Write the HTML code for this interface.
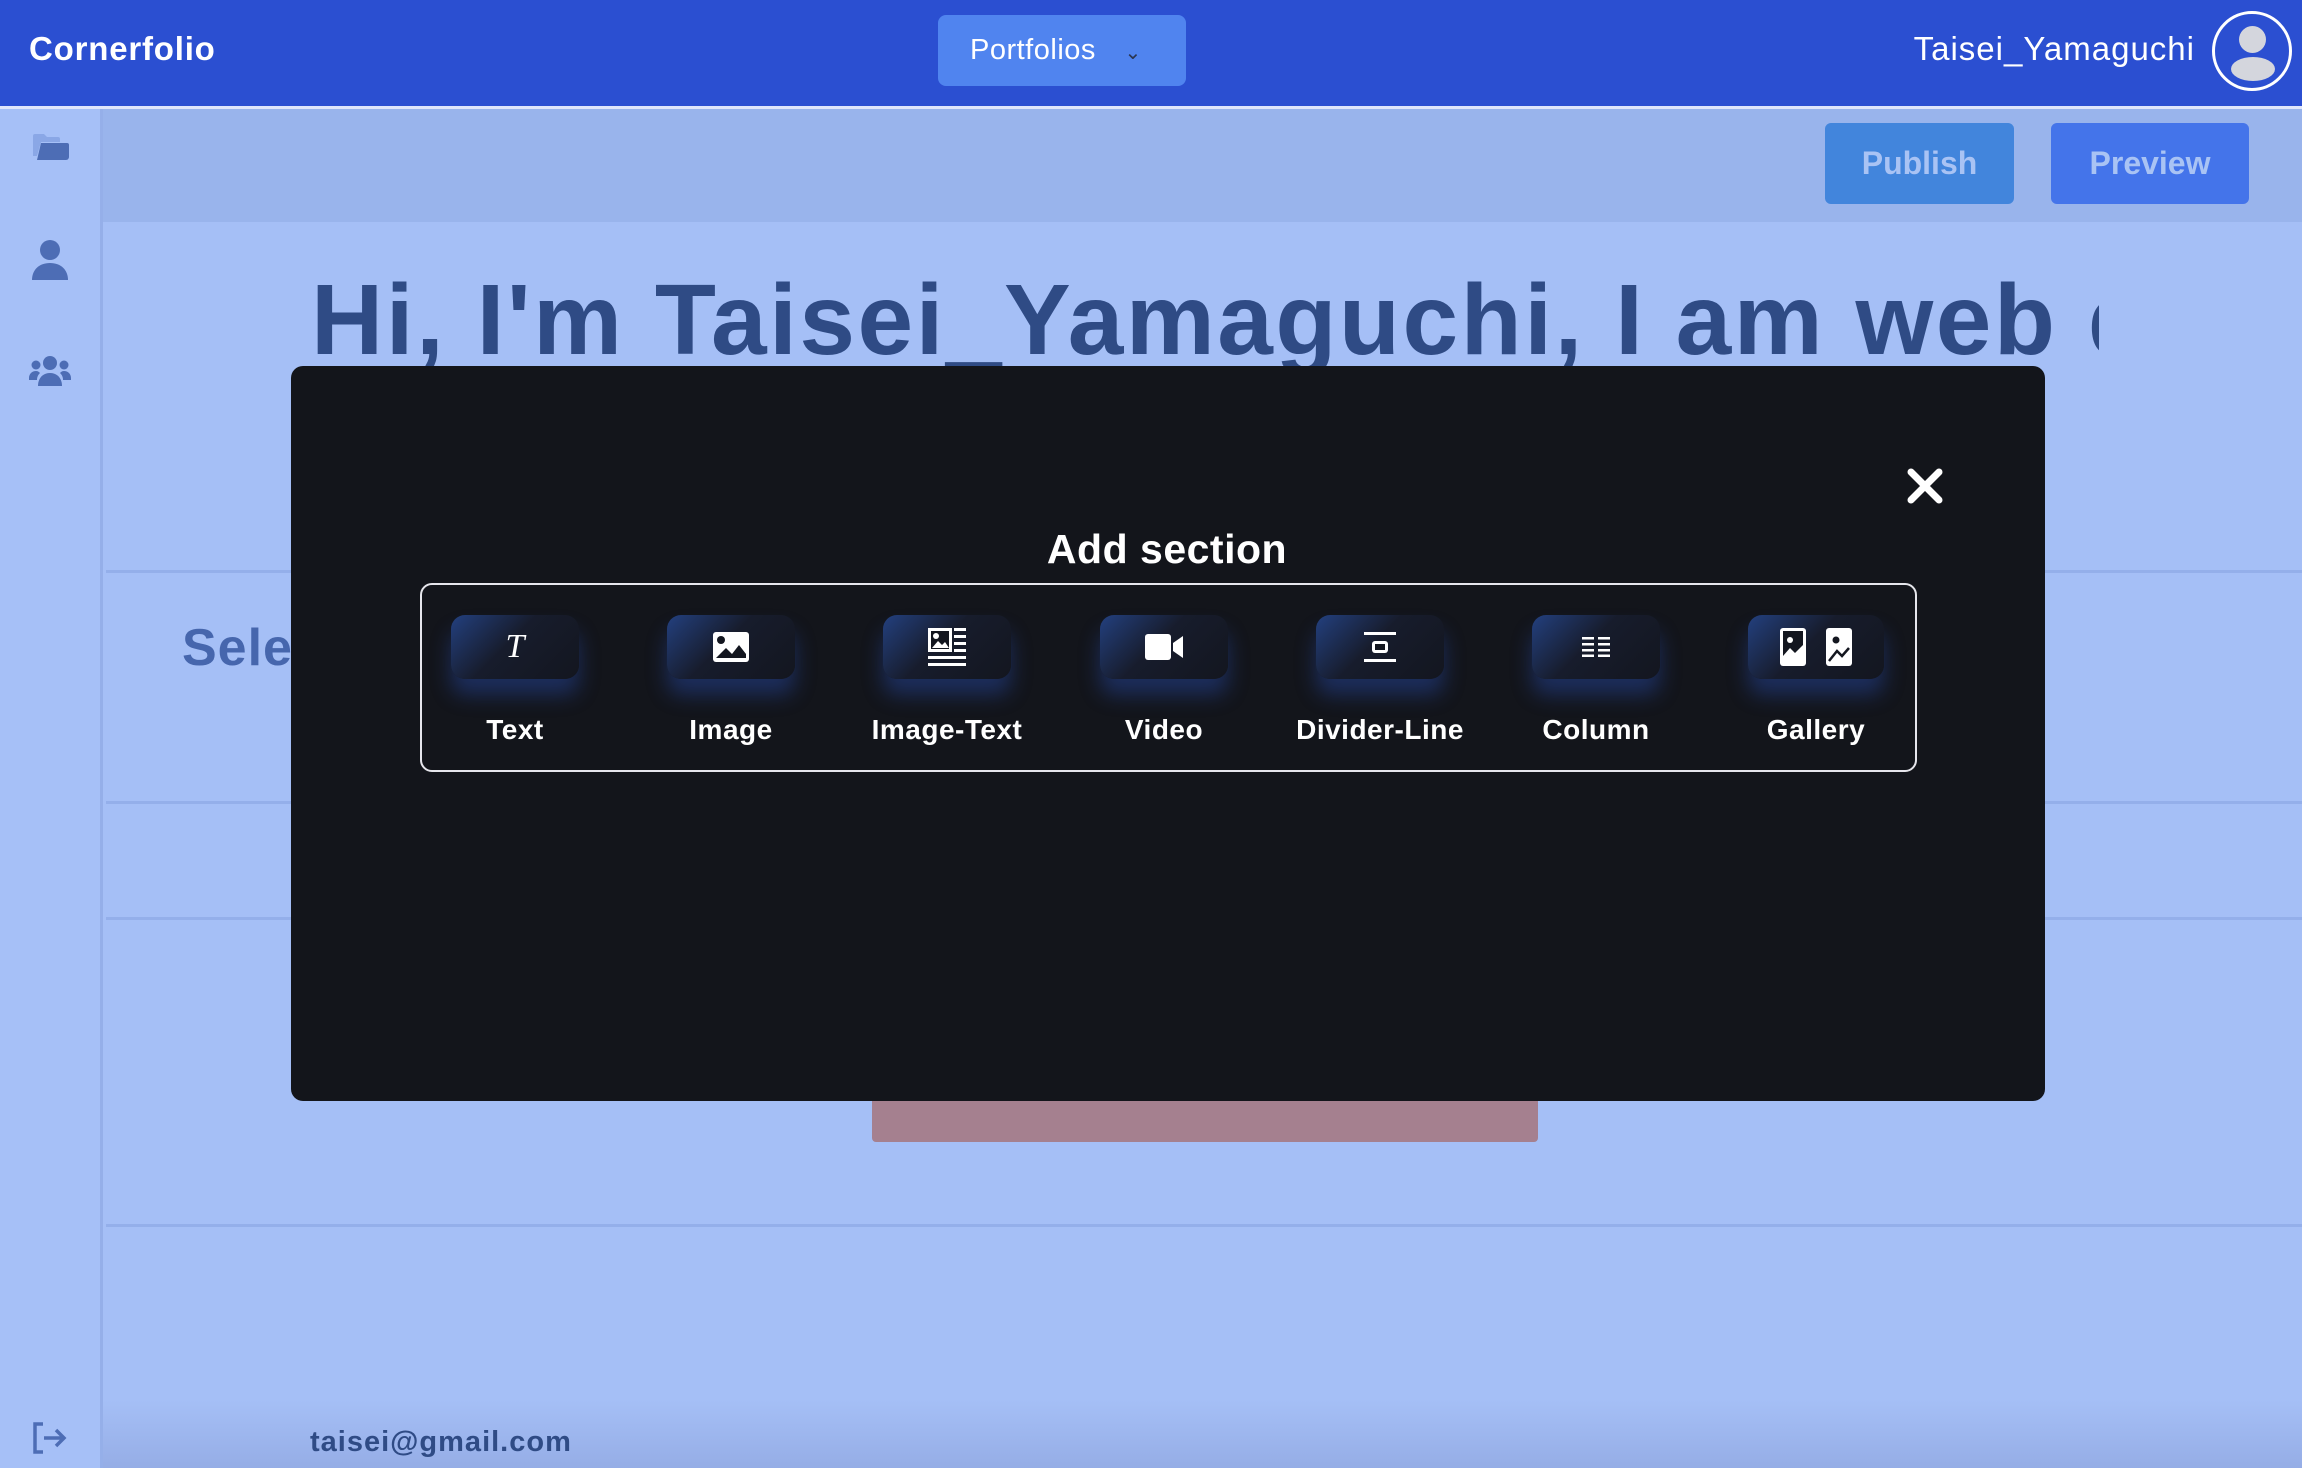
<!DOCTYPE html>
<html><head><meta charset="utf-8"><style>
*{box-sizing:border-box;margin:0;padding:0}
body{width:2302px;height:1468px;overflow:hidden;background:#a5bff6;font-family:"Liberation Sans",sans-serif;position:relative}
.abs{position:absolute}
.hdr{left:0;top:0;width:2302px;height:106px;background:#2b4fd1}
.wl{left:0;top:106px;width:2302px;height:3px;background:#dfe6fb}
.bar{left:103px;top:109px;width:2199px;height:113px;background:#99b4ec}
.side{left:0;top:109px;width:103px;height:1359px;background:#a6c0f7;border-right:3px solid #95afe9}
.hl{left:106px;height:3px;width:2196px;background:#94afea}
.tile{width:128px;height:64px;border-radius:14px;background:linear-gradient(135deg,#23407f 0%,#171c2c 45%,#13161f 100%);box-shadow:0 16px 20px rgba(40,75,170,.45);display:flex;align-items:center;justify-content:center}
.lbl{color:#fff;font-weight:bold;font-size:28px;text-align:center;width:220px;letter-spacing:.5px}
</style></head><body>
<div class="abs hdr"></div>
<div class="abs" style="left:29px;top:30px;color:#fff;font-weight:bold;font-size:33px;letter-spacing:.8px">Cornerfolio</div>
<div class="abs" style="left:938px;top:15px;width:248px;height:71px;background:#5084ef;border-radius:8px;color:#fff;font-size:29px;line-height:71px;padding-left:32px;letter-spacing:.5px">Portfolios <span style="font-size:20px;margin-left:20px;color:#2a3550">&#8964;</span></div>
<div class="abs" style="right:107px;top:30px;color:#fff;font-size:33px;letter-spacing:1px">Taisei_Yamaguchi</div>
<div class="abs" style="left:2212px;top:11px;width:80px;height:80px;border:3px solid #fff;border-radius:50%;overflow:hidden">
<div class="abs" style="left:24px;top:12px;width:27px;height:27px;border-radius:50%;background:#d4d6dd"></div>
<div class="abs" style="left:16px;top:43px;width:44px;height:24px;border-radius:50%;background:#d4d6dd"></div></div>
<div class="abs wl"></div>
<div class="abs side"></div>
<div class="abs bar"></div>
<div class="abs" style="left:1825px;top:123px;width:189px;height:81px;background:#4285dc;border-radius:6px;color:#a9c3f4;font-weight:bold;font-size:32px;line-height:81px;text-align:center">Publish</div>
<div class="abs" style="left:2051px;top:123px;width:198px;height:81px;background:#4474ea;border-radius:6px;color:#a9c3f4;font-weight:bold;font-size:32px;line-height:81px;text-align:center">Preview</div>
<svg class="abs" style="left:33px;top:134px" width="36" height="26" viewBox="0 0 36 26"><path d="M0 2a2 2 0 0 1 2-2h9l3 3h11a2 2 0 0 1 2 2v3H8l-4 14H0z" fill="#8aa7e6"/><path d="M8 9h26a2 2 0 0 1 2 2v12a3 3 0 0 1-3 3H4z" fill="#4d6db5"/></svg>
<svg class="abs" style="left:32px;top:240px" width="36" height="40" viewBox="0 0 36 40"><circle cx="18" cy="10" r="10" fill="#4d6db5"/><path d="M0 40c0-10 7-17 18-17s18 7 18 17z" fill="#4d6db5"/></svg>
<svg class="abs" style="left:29px;top:356px" width="42" height="30" viewBox="0 0 42 30"><circle cx="21" cy="7" r="7" fill="#4d6db5"/><circle cx="7" cy="9" r="4.5" fill="#4d6db5"/><circle cx="35" cy="9" r="4.5" fill="#4d6db5"/><path d="M9 30c0-8 5-13 12-13s12 5 12 13z" fill="#4d6db5"/><path d="M0 22c0-4 3-7 7-7 2 0 3 1 4 2-2 2-3 4-3 7H0z M42 22c0-4-3-7-7-7-2 0-3 1-4 2 2 2 3 4 3 7h8z" fill="#4d6db5"/></svg>
<svg class="abs" style="left:32px;top:1422px" width="36" height="32" viewBox="0 0 36 32" fill="none" stroke="#4d6db5" stroke-width="3.5"><path d="M11 2H3v28h8"/><path d="M12 16h20M24 8l8 8-8 8"/></svg>
<div class="abs" style="left:0;top:265px;width:2099px;overflow:hidden;height:120px"><div style="padding-left:311px;white-space:nowrap;color:#2f4b85;font-weight:bold;font-size:100px;line-height:110px;letter-spacing:2.5px">Hi, I'm Taisei_Yamaguchi, I am web developer</div></div>
<div class="abs hl" style="top:570px"></div>
<div class="abs hl" style="top:801px"></div>
<div class="abs hl" style="top:917px"></div>
<div class="abs hl" style="top:1224px"></div>
<div class="abs" style="left:182px;top:618px;color:#4666ad;font-weight:bold;font-size:52px;letter-spacing:1px">Select</div>
<div class="abs" style="left:872px;top:1095px;width:666px;height:47px;background:#a5808f;border-radius:0 0 4px 4px"></div>
<div class="abs" style="left:103px;top:1400px;width:2199px;height:68px;background:linear-gradient(180deg,rgba(120,140,200,0) 0%,rgba(120,140,200,.35) 100%)"></div>
<div class="abs" style="left:310px;top:1426px;color:#2f4b85;font-weight:bold;font-size:29px;letter-spacing:1px">taisei@gmail.com</div>
<div class="abs" style="left:291px;top:366px;width:1754px;height:735px;background:#13151b;border-radius:12px"></div>
<svg class="abs" style="left:1907px;top:468px" width="36" height="36" viewBox="0 0 36 36"><path d="M4 4L32 32M32 4L4 32" stroke="#fff" stroke-width="7" stroke-linecap="round"/></svg>
<div class="abs" style="left:867px;top:526px;width:600px;text-align:center;color:#fff;font-weight:bold;font-size:41px;letter-spacing:.5px">Add section</div>
<div class="abs" style="left:420px;top:583px;width:1497px;height:189px;border:2.5px solid #e6e6ec;border-radius:12px"></div>
<div class="abs tile" style="left:451px;top:615px"><span style="color:#fff;font-family:'Liberation Serif',serif;font-style:italic;font-size:34px">T</span></div>
<div class="abs tile" style="left:667px;top:615px"><svg width="36" height="30" viewBox="0 0 36 30"><rect x="0" y="0" width="36" height="30" rx="3" fill="#fff"/><circle cx="8" cy="8" r="4" fill="#13161f"/><path d="M3 26l10-10 6 6 7-9 7 9v4z" fill="#13161f"/></svg></div>
<div class="abs tile" style="left:883px;top:615px"><svg width="38" height="38" viewBox="0 0 38 38" fill="#fff"><rect x="0" y="0" width="24" height="24"/><rect x="3" y="3" width="18" height="18" fill="#13161f"/><circle cx="8" cy="8" r="3"/><path d="M4 20l6-7 4 4 3-3 4 6z"/><rect x="26" y="0" width="12" height="3"/><rect x="26" y="7" width="12" height="3"/><rect x="26" y="14" width="12" height="3"/><rect x="26" y="21" width="12" height="3"/><rect x="0" y="28" width="38" height="3"/><rect x="0" y="35" width="38" height="3"/></svg></div>
<div class="abs tile" style="left:1100px;top:615px"><svg width="38" height="26" viewBox="0 0 38 26" fill="#fff"><rect x="0" y="0" width="26" height="26" rx="3"/><path d="M28 9l10-7v22l-10-7z"/></svg></div>
<div class="abs tile" style="left:1316px;top:615px"><svg width="32" height="30" viewBox="0 0 32 30" fill="#fff"><rect x="0" y="0" width="32" height="3"/><rect x="0" y="27" width="32" height="3"/><rect x="8" y="9" width="16" height="12" rx="3"/><rect x="11" y="12" width="10" height="6" fill="#13161f"/></svg></div>
<div class="abs tile" style="left:1532px;top:615px"><svg width="28" height="20" viewBox="0 0 28 20" fill="#fff"><rect x="0" y="0" width="12" height="2.5"/><rect x="0" y="6" width="12" height="2.5"/><rect x="0" y="12" width="12" height="2.5"/><rect x="0" y="17.5" width="12" height="2.5"/><rect x="16" y="0" width="12" height="2.5"/><rect x="16" y="6" width="12" height="2.5"/><rect x="16" y="12" width="12" height="2.5"/><rect x="16" y="17.5" width="12" height="2.5"/></svg></div>
<div class="abs tile" style="left:1748px;top:615px;width:136px"><svg width="72" height="38" viewBox="0 0 72 38" fill="#fff"><rect x="0" y="0" width="26" height="38" rx="3"/><rect x="3" y="3" width="20" height="28" fill="#13161f"/><circle cx="10" cy="12" r="3"/><path d="M3 28l7-8 5 5 8-8v14H3z"/><rect x="46" y="0" width="26" height="38" rx="3"/><circle cx="56" cy="12" r="3.5" fill="#13161f"/><path d="M49 33l8-10 5 5 7-8" stroke="#13161f" stroke-width="2.5" fill="none"/></svg></div>
<div class="abs lbl" style="left:405px;top:714px">Text</div>
<div class="abs lbl" style="left:621px;top:714px">Image</div>
<div class="abs lbl" style="left:837px;top:714px">Image-Text</div>
<div class="abs lbl" style="left:1054px;top:714px">Video</div>
<div class="abs lbl" style="left:1270px;top:714px">Divider-Line</div>
<div class="abs lbl" style="left:1486px;top:714px">Column</div>
<div class="abs lbl" style="left:1706px;top:714px">Gallery</div>
</body></html>
